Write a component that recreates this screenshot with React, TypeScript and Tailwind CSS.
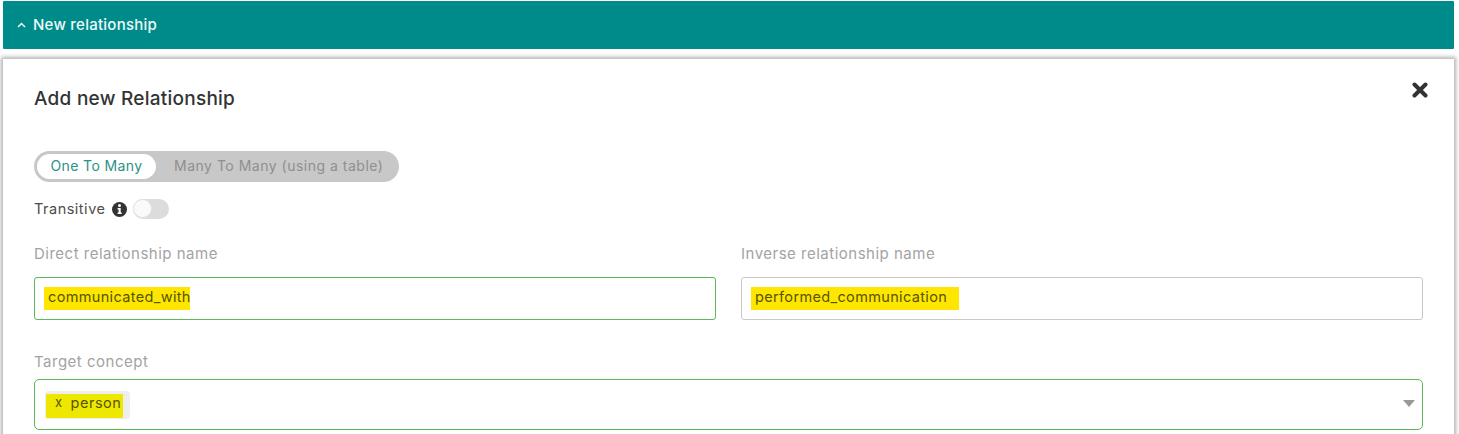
import React from "react";

const font = "font-['Inter','Noto_Sans',sans-serif]";

function Field({ label, value, extra, focused }: { label: string; value: string; extra: string; focused: boolean }) {
  return (
    <div className="flex flex-col">
      <div className="h-[24px] text-[15px] leading-[24px] tracking-[0.5px] text-[#a3a3a3]">{label}</div>
      <div className={`mt-[11px] flex h-[43px] items-center rounded-[3px] border pl-[9px] ${focused ? "border-[#5cb85c]" : "border-[#c9c9c9]"}`}>
        <span className={`block h-[23px] whitespace-nowrap bg-[#ffe600] pl-[4px] text-[14.5px] leading-[19px] tracking-[0.35px] text-[#555500] ${extra}`}>{value}</span>
      </div>
    </div>
  );
}

export default function App() {
  return (
    <div className={`h-[434px] w-[1459px] overflow-hidden bg-white pl-[3px] pr-[5px] pt-[1px] ${font}`}>
      <div className="flex h-[48px] items-center gap-[7px] rounded-[1px] bg-[#008b8b] pl-[14px] text-[15px] font-medium tracking-[0.25px] text-[#eefaf8]">
        <svg width="9" height="6" viewBox="0 0 9 6" fill="none" stroke="currentColor" strokeWidth="1.5">
          <path d="M1 5l3.5-3.5L8 5" />
        </svg>
        <span>New relationship</span>
      </div>
      <div className="relative mt-[10px] h-[400px] bg-white pl-[31px] pr-[31px] shadow-[0_0_4px_2px_rgba(0,0,0,0.3)]">
        <svg className="absolute right-[26px] top-[23px]" width="16" height="16" viewBox="0 0 16 16" fill="none" stroke="#333333" strokeWidth="4" strokeLinecap="round">
          <path d="M2.5 2.5l11 11M13.5 2.5l-11 11" />
        </svg>
        <h2 className="pt-[28px] text-[19px] font-medium leading-[24px] tracking-[0.25px] text-[#333333]">Add new Relationship</h2>

        <div className="mt-[40px] flex h-[31px] w-[365px] items-center rounded-full bg-[#c8c8c8] pl-[3px] text-[14px] tracking-[0.4px]">
          <div className="flex h-[25px] w-[119px] items-center justify-center rounded-full bg-white pb-[2px] text-[#2b9187]">One To Many</div>
          <div className="whitespace-nowrap pb-[2px] pl-[18px] tracking-[0.5px] text-[#8f8f8f]">Many To Many (using a table)</div>
        </div>

        <div className="mt-[17px] flex h-[20px] items-center text-[14.5px] tracking-[0.5px] text-[#4d4d4d]">
          <span>Transitive</span>
          <svg className="ml-[7px]" width="15" height="15" viewBox="0 0 15 15">
            <circle cx="7.5" cy="7.5" r="7.5" fill="#333333" />
            <circle cx="7.5" cy="3.6" r="1.5" fill="#ffffff" />
            <path d="M5.6 6h3.1v4.6h1v1.4H5.6v-1.4h1V7.4h-1z" fill="#ffffff" />
          </svg>
          <div className="ml-[6px] h-[20px] w-[36px] rounded-full bg-[#dcdcdc]">
            <div className="h-[19px] w-[19px] rounded-full border border-[#e3e3e3] bg-[#fafafa]" />
          </div>
        </div>

        <div className="mt-[23px] grid grid-cols-[682px_682px] gap-x-[25px]">
          <Field label="Direct relationship name" value="communicated_with" extra="w-[146px]" focused />
          <Field label="Inverse relationship name" value="performed_communication" extra="w-[208px]" focused={false} />
        </div>

        <div className="mt-[30px] h-[24px] text-[15px] leading-[24px] tracking-[0.5px] text-[#a3a3a3]">Target concept</div>
        <div className="relative mt-[5px] flex h-[51px] w-[1389px] items-center rounded-[5px] border border-[#5cb85c] pl-[10px]">
          <div className="flex h-[28px] w-[85px] items-center rounded-[4px] bg-[#eeeeee]">
            <div className="ml-[1px] mt-[2px] flex h-[24px] w-[77px] items-center bg-[#eee800] pb-[5px] pl-[9px] text-[14.5px] tracking-[0.5px] text-[#555500]">
              <span className="text-[13px]">x</span>
              <span className="ml-[8px]">person</span>
            </div>
          </div>
          <div className="absolute right-[7px] top-[20px] h-0 w-0 border-x-[6.5px] border-t-[7px] border-x-transparent border-t-[#999999]" />
        </div>
      </div>
    </div>
  );
}
